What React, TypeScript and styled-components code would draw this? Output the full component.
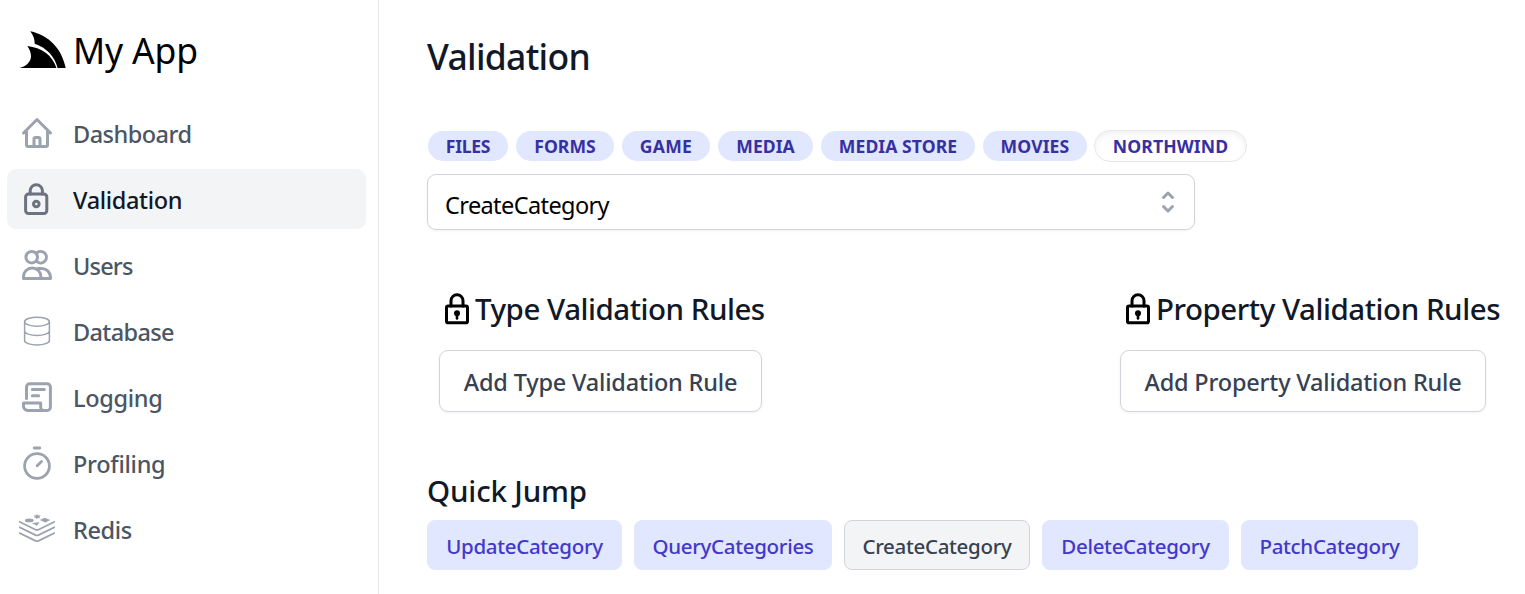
import React from "react";
import styled, { createGlobalStyle } from "styled-components";

const GlobalStyle = createGlobalStyle`
  *, *::before, *::after { box-sizing: border-box; }
  html, body { margin: 0; padding: 0; background: #fff; overflow: hidden; }
  body { font-family: "Noto Sans", "Open Sans", sans-serif; color: #111827; }
  h1, h2 { margin: 0; }
  button { font-family: inherit; cursor: pointer; }
`;

const Shell = styled.div`
  display: flex;
  width: 100%;
  height: 594px;
`;

const Sidebar = styled.aside`
  flex: 0 0 379px;
  border-right: 1px solid #e5e7eb;
  padding: 23px 12px 0 7px;
`;

const Brand = styled.a`
  display: flex;
  align-items: center;
  height: 54px;
  margin-bottom: 26px;
  padding-left: 12px;
  gap: 6px;
  color: #000;
`;

const BrandName = styled.span`
  font-size: 35.5px;
  line-height: 54px;
  letter-spacing: -0.15px;
  white-space: nowrap;
`;

const Nav = styled.nav`
  display: flex;
  flex-direction: column;
  gap: 6px;
`;

const NavItem = styled.a<{ $active?: boolean }>`
  display: flex;
  align-items: center;
  gap: 18px;
  height: 60px;
  padding: 0 12px;
  border-radius: 9px;
  background: ${(p) => (p.$active ? "#f3f4f6" : "transparent")};
  color: ${(p) => (p.$active ? "#111827" : "#4b5563")};
  svg { color: ${(p) => (p.$active ? "#6b7280" : "#9ca3af")}; }
`;

const NavLabel = styled.span<{ $track: number }>`
  font-size: 23.5px;
  font-weight: 500;
  line-height: 36px;
  padding-top: 1px;
  letter-spacing: ${(p) => p.$track}px;
`;

const Icon = styled.svg`
  width: 36px;
  height: 36px;
  flex: none;
  fill: none;
  stroke: currentColor;
  stroke-linecap: round;
  stroke-linejoin: round;
`;

const FlatIcon = styled(Icon)`
  stroke-linecap: butt;
`;

const Main = styled.main`
  flex: 1;
  min-width: 0;
  padding: 29px 0 0 48px;
`;

const Title = styled.h1`
  font-size: 35.5px;
  font-weight: 500;
  line-height: 54px;
  letter-spacing: -0.7px;
`;

const PillRow = styled.div`
  display: flex;
  align-items: center;
  gap: 8px;
  height: 32px;
  margin-top: 47px;
  padding-left: 1px;
`;

const Pill = styled.button<{ $width: number; $track: number; $active?: boolean }>`
  width: ${(p) => p.$width}px;
  height: ${(p) => (p.$active ? 32 : 30)}px;
  margin-left: ${(p) => (p.$active ? -1 : 0)}px;
  padding: 0 0 1px;
  border: ${(p) => (p.$active ? "1px solid #e5e7eb" : "0")};
  border-radius: 16px;
  background: ${(p) => (p.$active ? "#fff" : "#e0e7ff")};
  box-shadow: ${(p) => (p.$active ? "inset 0 3px 6px rgba(0, 0, 0, 0.06)" : "none")};
  color: #3730a3;
  font-size: 17.6px;
  font-weight: 700;
  line-height: 28px;
  letter-spacing: ${(p) => p.$track}px;
  white-space: nowrap;
`;

const Combo = styled.div`
  display: flex;
  align-items: center;
  justify-content: space-between;
  width: 768px;
  height: 56px;
  margin-top: 12px;
  padding: 0 11px 0 17px;
  border: 1px solid #d1d5db;
  border-radius: 9px;
  box-shadow: 0 1px 3px rgba(0, 0, 0, 0.06);
  color: #000;
`;

const ComboValue = styled.span`
  font-size: 23.5px;
  line-height: 36px;
  padding-top: 5px;
  letter-spacing: -0.6px;
`;

const Selector = styled.svg`
  width: 30px;
  height: 30px;
  color: #9ca3af;
  fill: currentColor;
`;

const Rules = styled.div`
  display: grid;
  grid-template-columns: 681px 1fr;
  margin-top: 56px;
  padding-left: 12px;
`;

const RuleHead = styled.div`
  display: flex;
  align-items: center;
  height: 45px;
  white-space: nowrap;
`;

const Heading = styled.h2<{ $track: number }>`
  font-size: 29.5px;
  font-weight: 500;
  line-height: 45px;
  letter-spacing: ${(p) => p.$track}px;
`;

const AddButton = styled.button<{ $width: number }>`
  width: ${(p) => p.$width}px;
  height: 62px;
  margin-top: 19px;
  padding: 1px 0 0;
  border: 1px solid #d1d5db;
  border-radius: 9px;
  background: #fff;
  box-shadow: 0 1px 3px rgba(0, 0, 0, 0.06);
  color: #374151;
  font-size: 23.5px;
  font-weight: 500;
  letter-spacing: -0.19px;
  white-space: nowrap;
`;

const Jump = styled.section`
  margin-top: 56px;
`;

const JumpRow = styled.div`
  display: flex;
  gap: 12px;
  margin-top: 7px;
`;

const JumpButton = styled.button<{ $width: number; $active?: boolean }>`
  width: ${(p) => p.$width}px;
  height: 50px;
  padding: 1px 0 0;
  border: 1px solid ${(p) => (p.$active ? "#d1d5db" : "#e0e7ff")};
  border-radius: 8px;
  background: ${(p) => (p.$active ? "#f3f4f6" : "#e0e7ff")};
  color: ${(p) => (p.$active ? "#374151" : "#4338ca")};
  font-size: 20.5px;
  font-weight: 500;
  letter-spacing: -0.31px;
  white-space: nowrap;
`;

const FinLogo = () => (
  <svg width="48" height="40" viewBox="0 0 48 40" fill="#000">
    <path d="M11.3 1.2C30 5 43 19 46.7 38H38.6C36 27 27.5 17.5 15.7 13.8 15.8 9.5 14.2 5 11.3 1.2Z" />
    <path d="M8.3 15.9C22.5 17.5 33.5 25 37.5 38H.4C7.5 36.2 12 31.5 12 26.2 12 22.5 10.6 19 8.3 15.9Z" />
  </svg>
);

const HomeIcon = () => (
  <Icon viewBox="0 0 24 24" strokeWidth="2">
    <path d="M3 12l2-2m0 0l7-7 7 7M5 10v10a1 1 0 001 1h3m10-11l2 2m-2-2v10a1 1 0 01-1 1h-3m-6 0a1 1 0 001-1v-4a1 1 0 011-1h2a1 1 0 011 1v4a1 1 0 001 1m-6 0h6" />
  </Icon>
);

const LockIcon = () => (
  <Icon viewBox="0 0 36 36" strokeWidth="3">
    <rect x="6.6" y="12.9" width="21.2" height="19.6" rx="3" />
    <path d="M11.2 13V9.8a6.1 6.1 0 0 1 12.2 0v3.2" />
    <circle cx="17.3" cy="23" r="2.8" />
  </Icon>
);

const UsersIcon = () => (
  <Icon viewBox="0 0 36 36" strokeWidth="3">
    <circle cx="12.7" cy="10.2" r="5.8" />
    <path d="M18.2 5.5a5.8 5.8 0 1 1 0 9.4" />
    <path d="M4.5 31.5v-1.8a8.7 8.7 0 0 1 17.4 0v1.8Z" />
    <path d="M18.7 21.4h3.8a8.9 8.9 0 0 1 9 8.6v1.5h-9" />
  </Icon>
);

const DatabaseIcon = () => (
  <Icon viewBox="0 0 36 36" strokeWidth="1.5">
    <ellipse cx="18" cy="8.7" rx="12.4" ry="4.5" />
    <path d="M5.6 8.7v18.7c0 2.5 5.5 4.5 12.4 4.5s12.4-2 12.4-4.5V8.7M5.6 18c0 2.5 5.5 4.4 12.4 4.4s12.4-1.9 12.4-4.4" />
  </Icon>
);

const ScriptIcon = () => (
  <Icon viewBox="0 0 36 36" strokeWidth="3">
    <path d="M7.5 19.5V8a3.2 3.2 0 0 1 3.2-3.2h17.5A3.2 3.2 0 0 1 31.4 8v20.2a3.2 3.2 0 0 1-3.2 3.2H8.7a4.2 4.2 0 0 1-4.2-4.2V24h17.2v4.2a3.2 3.2 0 0 0 3.2 3.2" />
    <path d="M13.3 10.6h12M13.3 16.7h6.3" />
  </Icon>
);

const TimerIcon = () => (
  <Icon viewBox="0 0 36 36" strokeWidth="2.8">
    <circle cx="18" cy="21" r="12.4" />
    <path d="M15.2 3h5.6M18.2 20.7l4.3-4.2" />
  </Icon>
);

const RedisIcon = () => (
  <FlatIcon viewBox="0 0 36 36" strokeWidth="1.8">
    <path d="M0 10.6l16.6 8.1q1.4.6 2.8 0L36 10.6M0 16l16.6 8.1q1.4.6 2.8 0L36 16M0 21.8l16.6 8.1q1.4.6 2.8 0L36 21.8" />
    <g fill="currentColor" stroke="none">
      <ellipse cx="10.3" cy="9.4" rx="4.4" ry="1.9" />
      <path d="M25.7 6.7l5.6 2.4-5 2.3-5.5-2.4zM12.8 12.2l7.7-1.2-2.4 3.8z" />
      <path d="M14.6 4.2l2.3.3 1.2-1.5.9 1.4 2.8-.2-1.6 1.7 1.4 1.6-2.6-.4-1.5 1-.6-1.4-2.3-.3 1.3-.8z" />
    </g>
  </FlatIcon>
);

const KeyLock = () => (
  <Icon viewBox="0 0 36 36" strokeWidth="3" color="#000">
    <rect x="7.5" y="14.9" width="21" height="16.9" rx="1.6" />
    <path d="M12 14.9V9.7a6 6 0 0 1 12 0v5.2" />
    <circle cx="18" cy="22.3" r="1.5" fill="currentColor" />
    <path d="M18 22v5.4" strokeWidth="2.6" />
  </Icon>
);

const navItems = [
  { label: "Dashboard", icon: <HomeIcon />, track: -0.53 },
  { label: "Validation", icon: <LockIcon />, track: -0.35, active: true },
  { label: "Users", icon: <UsersIcon />, track: -0.8 },
  { label: "Database", icon: <DatabaseIcon />, track: -0.65 },
  { label: "Logging", icon: <ScriptIcon />, track: -0.33 },
  { label: "Profiling", icon: <TimerIcon />, track: -0.28 },
  { label: "Redis", icon: <RedisIcon />, track: -0.4 },
];

const pills = [
  { label: "FILES", width: 80, track: -0.3 },
  { label: "FORMS", width: 98, track: 0 },
  { label: "GAME", width: 88, track: 0.3 },
  { label: "MEDIA", width: 95, track: 0 },
  { label: "MEDIA STORE", width: 154, track: 0.05 },
  { label: "MOVIES", width: 104, track: 0.1 },
  { label: "NORTHWIND", width: 153, track: 0.1, active: true },
];

const jumps = [
  { label: "UpdateCategory", width: 195 },
  { label: "QueryCategories", width: 198 },
  { label: "CreateCategory", width: 186, active: true },
  { label: "DeleteCategory", width: 187 },
  { label: "PatchCategory", width: 177 },
];

export default function App() {
  return (
    <Shell>
      <GlobalStyle />
      <Sidebar>
        <Brand>
          <FinLogo />
          <BrandName>My App</BrandName>
        </Brand>
        <Nav>
          {navItems.map((n) => (
            <NavItem key={n.label} $active={n.active}>
              {n.icon}
              <NavLabel $track={n.track}>{n.label}</NavLabel>
            </NavItem>
          ))}
        </Nav>
      </Sidebar>
      <Main>
        <Title>Validation</Title>
        <PillRow>
          {pills.map((p) => (
            <Pill key={p.label} $width={p.width} $track={p.track} $active={p.active}>
              {p.label}
            </Pill>
          ))}
        </PillRow>
        <Combo>
          <ComboValue>CreateCategory</ComboValue>
          <Selector viewBox="0 0 20 20">
            <path
              fillRule="evenodd"
              clipRule="evenodd"
              d="M10 3a1 1 0 01.707.293l3 3a1 1 0 01-1.414 1.414L10 5.414 7.707 7.707a1 1 0 01-1.414-1.414l3-3A1 1 0 0110 3zm-3.707 9.293a1 1 0 011.414 0L10 14.586l2.293-2.293a1 1 0 011.414 1.414l-3 3a1 1 0 01-1.414 0l-3-3a1 1 0 010-1.414z"
            />
          </Selector>
        </Combo>
        <Rules>
          <div>
            <RuleHead>
              <KeyLock />
              <Heading $track={-0.48}>Type Validation Rules</Heading>
            </RuleHead>
            <AddButton $width={323}>Add Type Validation Rule</AddButton>
          </div>
          <div>
            <RuleHead>
              <KeyLock />
              <Heading $track={-0.46}>Property Validation Rules</Heading>
            </RuleHead>
            <AddButton $width={366}>Add Property Validation Rule</AddButton>
          </div>
        </Rules>
        <Jump>
          <Heading $track={-0.15}>Quick Jump</Heading>
          <JumpRow>
            {jumps.map((j) => (
              <JumpButton key={j.label} $width={j.width} $active={j.active}>
                {j.label}
              </JumpButton>
            ))}
          </JumpRow>
        </Jump>
      </Main>
    </Shell>
  );
}
